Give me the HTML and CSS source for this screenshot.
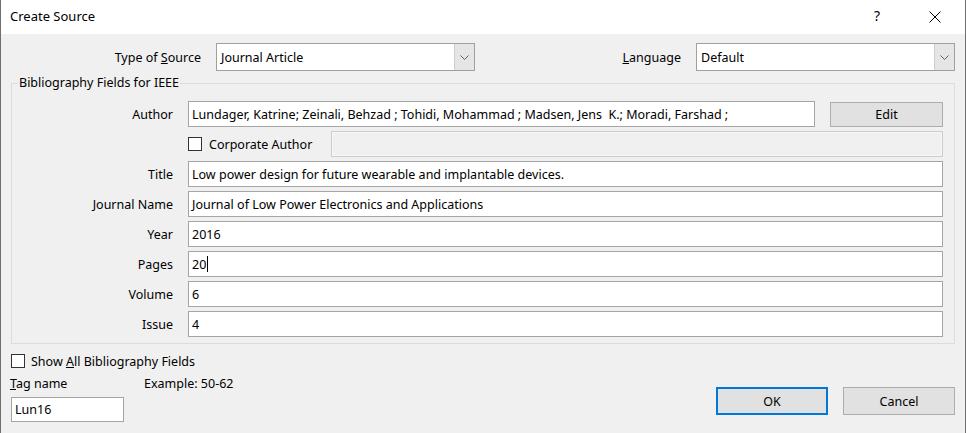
FILE: index.html
```html
<!DOCTYPE html>
<html>
<head>
<meta charset="utf-8">
<link rel="stylesheet" href="styles.css">
</head>
<body>
<div class="window">
  <div class="titlebar">
    <span class="title">Create Source</span>
    <span class="help">?</span>
    <span class="close"><svg width="12" height="12" viewBox="0 0 12 12"><path d="M0.5 0.5L11.5 11.5M11.5 0.5L0.5 11.5" stroke="#000" stroke-width="1" fill="none"/></svg></span>
  </div>
  <div class="content">
    <div class="toprow">
      <div class="lbl">Type of <u>S</u>ource</div>
      <div class="combo"><span class="combo-text">Journal Article</span><span class="drop"><svg width="9" height="5" viewBox="0 0 9 5"><path d="M0.5 0.5L4.5 4.5L8.5 0.5" stroke="#606060" fill="none"/></svg></span></div>
      <div class="lbl"><u>L</u>anguage</div>
      <div class="combo"><span class="combo-text">Default</span><span class="drop"><svg width="9" height="5" viewBox="0 0 9 5"><path d="M0.5 0.5L4.5 4.5L8.5 0.5" stroke="#606060" fill="none"/></svg></span></div>
    </div>
    <fieldset class="group">
      <legend>Bibliography Fields for IEEE</legend>
      <div class="fields">
        <div class="flbl">Author</div>
        <div class="authorline">
          <div class="input grow">Lundager, Katrine; Zeinali, Behzad ; Tohidi, Mohammad ; Madsen, Jens&nbsp; K.; Moradi, Farshad ;</div>
          <div class="btn edit">Edit</div>
        </div>
        <div></div>
        <div class="corpline">
          <span class="check"></span>
          <span class="corplbl">Corporate Author</span>
          <div class="input disabled grow"></div>
        </div>
        <div class="flbl">Title</div>
        <div class="input">Low power design for future wearable and implantable devices.</div>
        <div class="flbl">Journal Name</div>
        <div class="input">Journal of Low Power Electronics and Applications</div>
        <div class="flbl">Year</div>
        <div class="input">2016</div>
        <div class="flbl">Pages</div>
        <div class="input">20<span class="caret"></span></div>
        <div class="flbl">Volume</div>
        <div class="input">6</div>
        <div class="flbl">Issue</div>
        <div class="input">4</div>
      </div>
    </fieldset>
    <div class="showall">
      <span class="check"></span>
      <span>Show <u>A</u>ll Bibliography Fields</span>
    </div>
    <div class="bottom">
      <div class="tag">
        <div class="tagrow">
          <span class="taglbl"><u>T</u>ag name</span>
          <span>Example: 50-62</span>
        </div>
        <div class="input taginput">Lun16</div>
      </div>
      <div class="buttons">
        <div class="btn ok">OK</div>
        <div class="btn">Cancel</div>
      </div>
    </div>
  </div>
</div>
</body>
</html>
```
FILE: styles.css
```css
* { box-sizing: border-box; }
html, body { margin: 0; padding: 0; }
body {
  font-family: "Segoe UI", "Noto Sans", sans-serif;
  font-size: 12.5px;
  color: #000;
  background: #f0f0f0;
}
.window {
  width: 966px;
  height: 433px;
  border-left: 1px solid #6f6f6f;
  border-right: 1px solid #6f6f6f;
  background: #f0f0f0;
  overflow: hidden;
}
.titlebar {
  height: 34px;
  background: #fff;
  display: flex;
  align-items: center;
  padding-left: 9px;
  padding-bottom: 3px;
}
.title { flex: 1; font-size: 13px; }
.help { width: 12px; margin-right: 43px; font-size: 14px; }
.close { display: flex; margin-right: 24px; margin-top: 2px; }
.content { padding-top: 9px; }
.toprow {
  display: grid;
  grid-template-columns: 200px 259px 1fr 259px;
  column-gap: 15px;
  align-items: center;
  margin-right: 10px;
  height: 28px;
}
.lbl { text-align: right; }
.combo {
  height: 28px;
  border: 1px solid #a0a0a0;
  background: #fff;
  display: flex;
  align-items: center;
}
.combo-text { flex: 1; padding-left: 4px; }
.drop {
  width: 20px;
  height: 26px;
  background: #e5e5e5;
  border-left: 1px solid #cfcfcf;
  display: flex;
  align-items: center;
  justify-content: center;
}
.group {
  margin: 4px 10px 0 10px;
  padding: 0 11px 6px 0;
  border: 1px solid #dcdcdc;
  min-width: 0;
}
.group legend {
  margin-left: 6px;
  padding: 0 1px;
  line-height: 16px;
}
.fields {
  display: grid;
  grid-template-columns: 161px 1fr;
  column-gap: 15px;
  row-gap: 4px;
  padding-top: 10px;
  grid-auto-rows: 26px;
  align-items: center;
}
.flbl { text-align: right; }
.input {
  height: 26px;
  border: 1px solid #a5a5a5;
  background: #fff;
  padding-left: 3px;
  display: flex;
  align-items: center;
  white-space: nowrap;
  overflow: hidden;
}
.grow { flex: 1; }
.authorline, .corpline {
  display: flex;
  align-items: center;
  height: 26px;
}
.btn {
  height: 25px;
  border: 1px solid #adadad;
  background: #e1e1e1;
  display: flex;
  align-items: center;
  justify-content: center;
}
.edit { width: 113px; margin-left: 15px; }
.check {
  width: 14px;
  height: 14px;
  border: 1px solid #333;
  background: #fff;
  flex: none;
}
.corplbl { margin-left: 7px; width: 122px; }
.disabled {
  background: #f0f0f0;
  border-color: #cccccc;
  box-shadow: inset 0 0 0 1px #f7f7f7;
}
.caret {
  display: inline-block;
  width: 1px;
  height: 16px;
  background: #000;
  margin-left: 1px;
}
.showall {
  display: flex;
  align-items: center;
  height: 16px;
  margin: 9px 0 0 10px;
}
.showall .check { margin-right: 6px; }
.bottom {
  display: flex;
  align-items: flex-start;
  margin-top: 7px;
}
.tag { margin-left: 9px; }
.tagrow { display: flex; line-height: 16px; }
.taglbl { width: 134px; }
.taginput { width: 113px; height: 25px; margin-top: 5px; margin-left: 1px; }
.buttons {
  margin-left: auto;
  margin-right: 10px;
  margin-top: 11px;
  display: flex;
  gap: 15px;
}
.buttons .btn { width: 112px; height: 28px; }
.btn.ok { border: 2px solid #0078d7; }
```
